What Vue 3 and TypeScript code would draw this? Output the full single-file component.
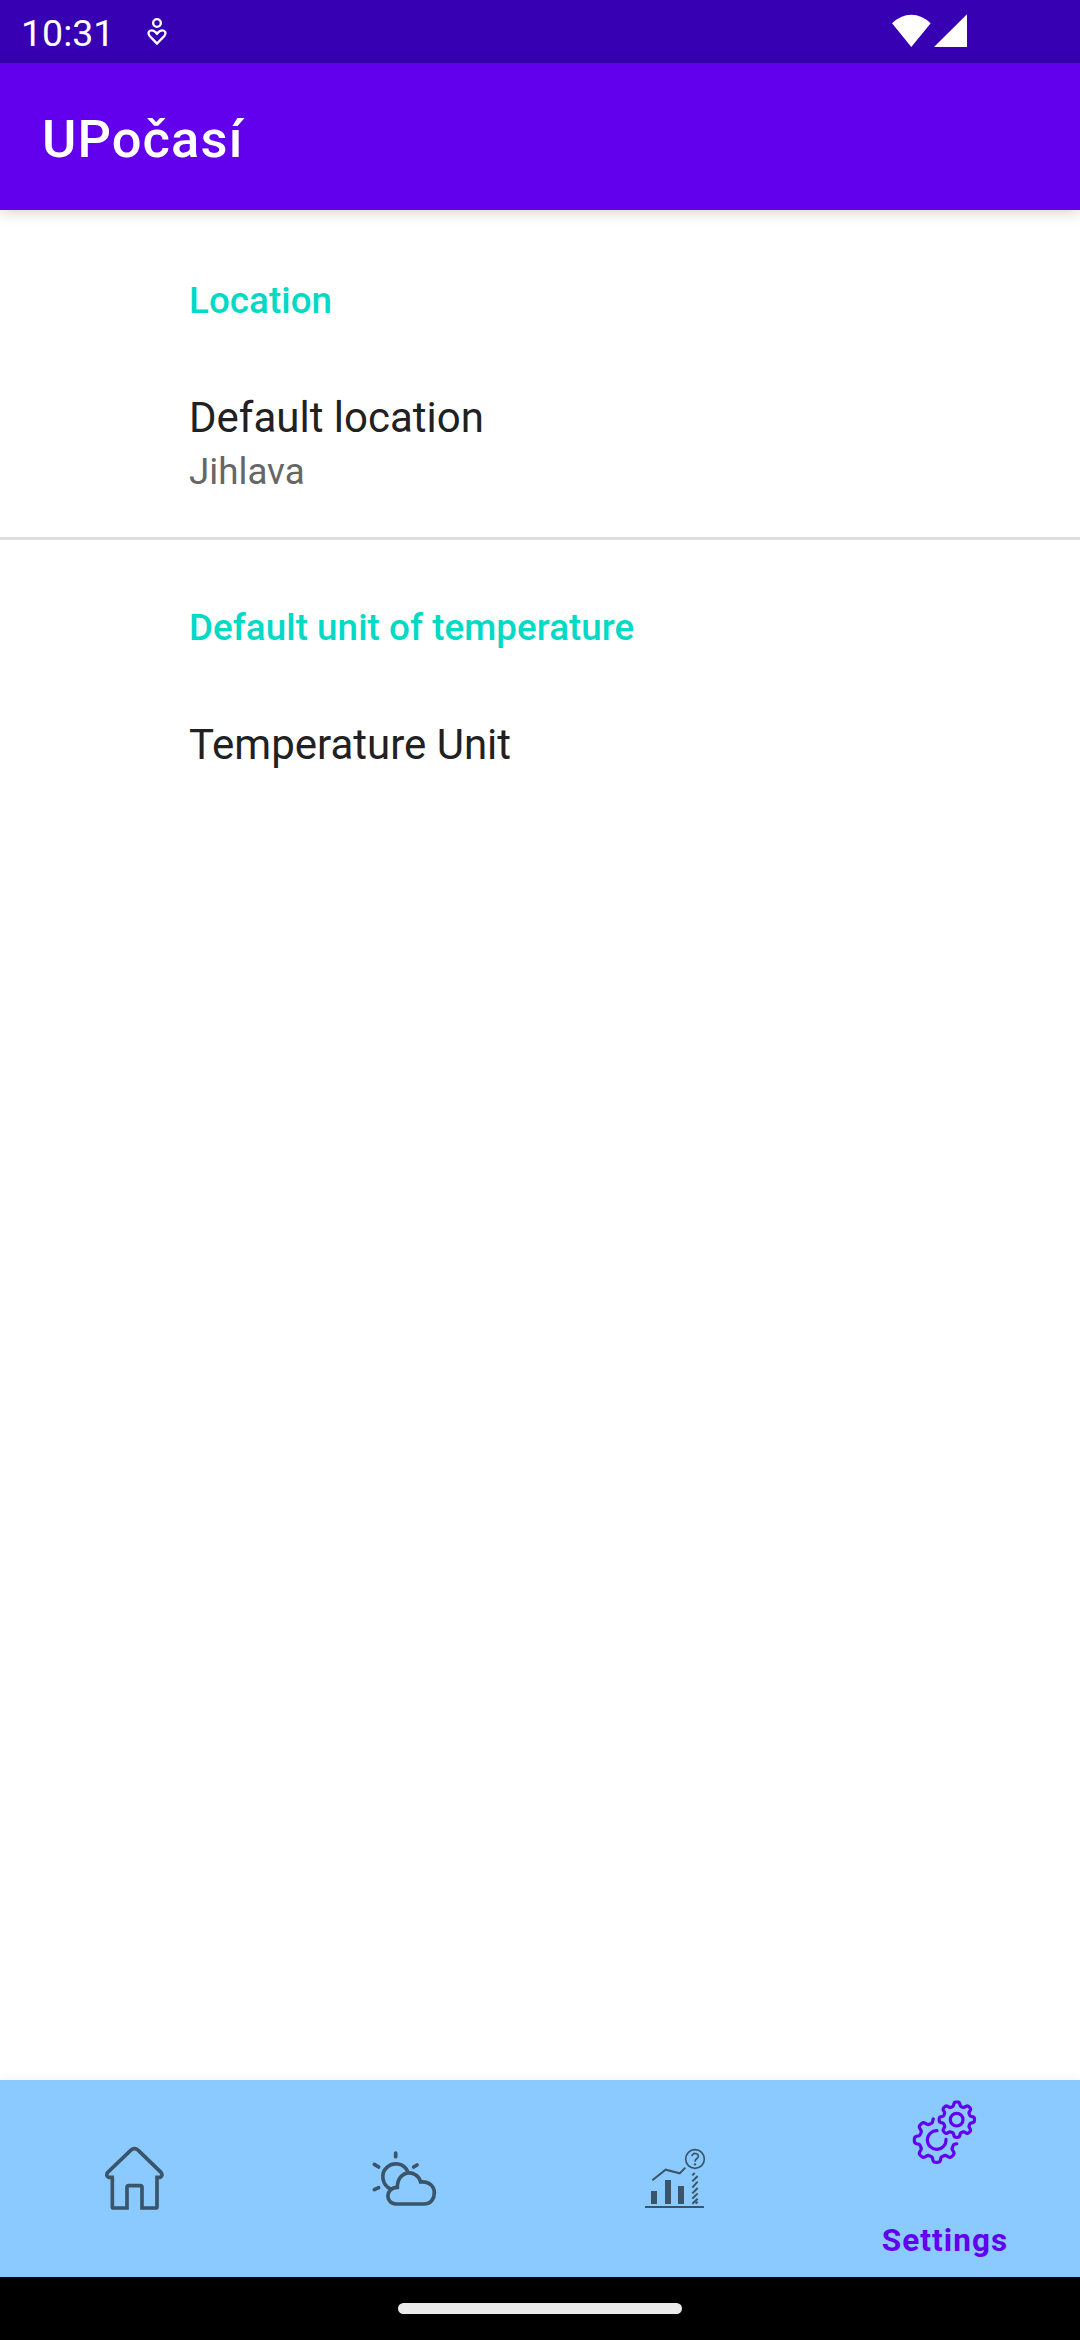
<script setup lang="ts">
interface Preference {
  title: string
  summary?: string
}
interface Category {
  name: string
  items: Preference[]
}

const categories: Category[] = [
  { name: 'Location', items: [{ title: 'Default location', summary: 'Jihlava' }] },
  { name: 'Default unit of temperature', items: [{ title: 'Temperature Unit' }] },
]

// Outline of an eight-toothed cog between two angles (degrees, clockwise from the right).
function cog(cx: number, cy: number, inner: number, outer: number, from: number, to: number): string {
  const mid = (inner + outer) / 2
  const amp = (outer - inner) / 2
  const points: string[] = []
  for (let a = from; a <= to; a += 1.5) {
    const t = (a * Math.PI) / 180
    const r = mid + (amp * Math.tanh(2.2 * Math.cos(8 * t))) / Math.tanh(2.2)
    points.push(`${(cx + r * Math.cos(t)).toFixed(1)} ${(cy + r * Math.sin(t)).toFixed(1)}`)
  }
  return 'M' + points.join('L')
}

const smallCog = cog(170.5, 104, 41, 53, 0, 360) + 'Z'
const largeCog = cog(110, 165, 52, 67, 10.5, 261)
</script>

<template>
  <div class="screen">
    <header class="status">
      <span class="clock">10:31</span>
      <svg class="person" viewBox="0 0 66 90">
        <circle cx="33" cy="18" r="11.5" />
        <path d="M33 80L11 57C4 49 8 40 17 40C24 40 29 45 33 50C37 45 42 40 49 40C58 40 62 49 55 57Z" />
      </svg>
      <svg class="signals" viewBox="0 0 228 102">
        <path d="M0 28Q26 2 58 2T116 28L58 99Z" />
        <path d="M126 99L225 1V99Z" />
      </svg>
    </header>
    <div class="toolbar"><h1>UPočasí</h1></div>

    <main class="content">
      <section v-for="c in categories" :key="c.name" class="category">
        <h2>{{ c.name }}</h2>
        <div v-for="p in c.items" :key="p.title" class="pref">
          <div class="title">{{ p.title }}</div>
          <div v-if="p.summary" class="summary">{{ p.summary }}</div>
        </div>
      </section>
    </main>

    <nav class="tabs">
      <div class="tab">
        <svg viewBox="0 0 270 270" stroke-width="11">
          <path d="M67 142V230Q67 234 71 234H111V172Q111 167 116 167H151Q156 167 156 172V234H196Q201 234 201 230V142H211Q220 136 213 127L145 61Q133 51 122 61L53 127Q46 137 56 142H72" />
        </svg>
      </div>
      <div class="tab">
        <svg viewBox="0 0 270 270" stroke-width="11">
          <path d="M107 69V80M43 103L56 111M161 111L171 105M43 179L56 173" stroke-linecap="round" />
          <path d="M92 177C66 165 61 130 80 113C99 94 133 99 143 125" />
          <path d="M108 222H192C214 222 223 204 223 188C223 169 207 154 182 156C171 116 112 119 112 172C76 173 74 220 108 222Z" />
        </svg>
      </div>
      <div class="tab">
        <svg viewBox="0 0 270 270">
          <g class="solid">
            <rect x="63" y="183" width="18" height="39" />
            <rect x="105" y="150" width="18" height="72" />
            <rect x="144" y="168" width="18" height="54" />
            <rect x="45" y="228" width="177" height="6" />
            <circle cx="195" cy="103" r="3.5" />
          </g>
          <path d="M67 151L107 119L149 130L166 113" stroke-width="6" />
          <circle cx="195" cy="87" r="28" stroke-width="5" />
          <path d="M186 79C186 67 205 68 205 79C205 86 195 85 195 95" stroke-width="5" />
          <path d="M187 136L194 129M187 154L203 138M187 173L203 155M187 190L203 174M187 206L203 190M187 221L203 206M197 221L203 215" stroke-width="6" />
        </svg>
      </div>
      <div class="tab active">
        <svg viewBox="0 0 270 270" stroke-width="9.5" stroke-linecap="round" stroke-linejoin="round">
          <path :d="smallCog" />
          <circle cx="170" cy="104" r="19" />
          <path :d="largeCog" />
          <path d="M111 137A28 28 0 1 0 138 163" />
        </svg>
        <span>Settings</span>
      </div>
    </nav>
    <footer class="gesture"><i></i></footer>
  </div>
</template>

<style>
body {
  margin: 0;
}
</style>

<style scoped>
.screen {
  display: flex;
  flex-direction: column;
  width: 1080px;
  height: 2340px;
  overflow: hidden;
  background: #fff;
  font-family: Roboto, sans-serif;
}
.status {
  display: flex;
  align-items: flex-start;
  box-sizing: border-box;
  height: 63px;
  padding-left: 21px;
  background: #3700b3;
  color: #fff;
}
.clock {
  width: 125px;
  padding-top: 11px;
  font-size: 37.5px;
  line-height: 44px;
}
.person {
  width: 22px;
  height: 30px;
  margin-top: 17px;
  fill: none;
  stroke: #fff;
  stroke-width: 7;
}
.signals {
  width: 76px;
  height: 34px;
  margin: 13.5px 112px 0 auto;
  fill: #fff;
}
.toolbar {
  display: flex;
  align-items: center;
  height: 147px;
  padding-left: 42px;
  background: #6200ee;
  box-shadow: 0 2px 14px rgba(0, 0, 0, 0.18);
}
h1 {
  margin: 5px 0 0;
  color: #fff;
  font-size: 52.5px;
  font-weight: 500;
  line-height: 62px;
  letter-spacing: 1.1px;
}
.content {
  flex: 1;
}
.category {
  padding: 0 0 42px 189px;
}
.category + .category {
  border-top: 3px solid #dedede;
}
h2 {
  margin: 0;
  padding-top: 69px;
  color: #03dac5;
  font-size: 36.75px;
  font-weight: 500;
  line-height: 44px;
  letter-spacing: 0.06px;
}
.category + .category h2 {
  padding-top: 66px;
}
.pref {
  padding-top: 70px;
}
.title {
  color: #212121;
  font-size: 42px;
  line-height: 50px;
}
.summary {
  margin-top: 7px;
  padding-bottom: 1px;
  color: #666;
  font-size: 36.75px;
  line-height: 44px;
}
.tabs {
  display: grid;
  grid-template-columns: repeat(4, 1fr);
  height: 197px;
  background: #8bcaff;
  box-shadow: 0 0 12px rgba(0, 0, 0, 0.06);
}
.tab {
  display: flex;
  flex-direction: column;
  align-items: center;
  padding-top: 50px;
  color: #3a546a;
}
.tab svg {
  width: 90px;
  height: 90px;
  fill: none;
  stroke: currentColor;
}
.solid {
  fill: currentColor;
  stroke: none;
}
.tab.active {
  padding-top: 5px;
  color: #6200ee;
}
.tab span {
  margin-top: 47px;
  font-size: 31.5px;
  font-weight: 700;
  line-height: 38px;
  letter-spacing: 1.1px;
}
.gesture {
  display: flex;
  justify-content: center;
  height: 63px;
  background: #000;
}
.gesture i {
  width: 284px;
  height: 11px;
  margin-top: 26px;
  border-radius: 6px;
  background: #ebebeb;
}
</style>
